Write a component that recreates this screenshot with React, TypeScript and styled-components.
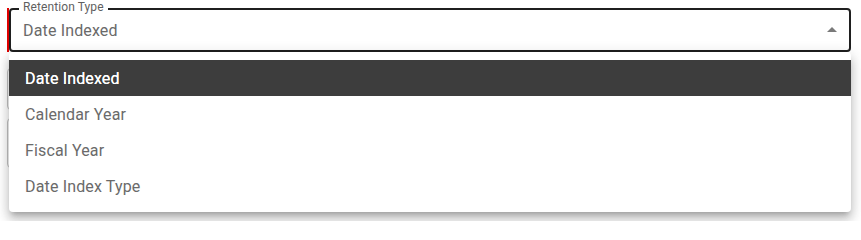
import React from 'react'
import styled, { createGlobalStyle } from 'styled-components'

const GlobalStyle = createGlobalStyle`
  html, body {
    margin: 0;
    padding: 0;
    background: #fff;
    font-family: Roboto, "Liberation Sans", sans-serif;
  }
`

const Page = styled.div`
  position: relative;
  width: 861px;
  height: 221px;
  box-sizing: border-box;
  padding: 8px 10px 0 7px;
  overflow: hidden;
`

const FieldRow = styled.div<{ $error?: boolean; $gap?: number }>`
  display: flex;
  border-left: 2px solid ${p => (p.$error ? '#e00000' : 'transparent')};
  margin-top: ${p => p.$gap ?? 0}px;
`

const Outlined = styled.div<{ $focused?: boolean; $height?: number }>`
  position: relative;
  flex: 1;
  display: flex;
  align-items: center;
  box-sizing: border-box;
  height: ${p => p.$height ?? 44}px;
  margin-left: ${p => (p.$focused ? '0' : '-2px')};
  padding: 0 5px 0 12px;
  border: ${p => (p.$focused ? '2px solid #1f1f1f' : '1px solid #c4c4c4')};
  border-radius: 4px;
`

const Label = styled.span`
  position: absolute;
  top: -10px;
  left: 8px;
  padding: 0 4px;
  background: #fff;
  font-size: 12px;
  line-height: 14px;
  letter-spacing: 0.1px;
  color: #5f5f5f;
`

const Value = styled.span`
  flex: 1;
  font-size: 16px;
  line-height: 19px;
  letter-spacing: 0.15px;
  color: #6a6a6a;
`

const Arrow = styled.svg`
  width: 24px;
  height: 24px;
  fill: #7a7a7a;
`

const Menu = styled.ul`
  position: absolute;
  top: 52px;
  left: 9px;
  width: 842px;
  margin: 0;
  padding: 8px 0;
  list-style: none;
  background: #fff;
  border-radius: 4px;
  box-shadow: 0px 5px 5px -3px rgba(0, 0, 0, 0.2), 0px 8px 10px 1px rgba(0, 0, 0, 0.14),
    0px 3px 14px 2px rgba(0, 0, 0, 0.12);
`

const Item = styled.li<{ $selected?: boolean }>`
  display: flex;
  align-items: center;
  height: 36px;
  padding: 0 16px;
  font-size: 16px;
  letter-spacing: 0.15px;
  font-weight: 400;
  color: ${p => (p.$selected ? '#fff' : '#6a6a6a')};
  background: ${p => (p.$selected ? '#3d3d3d' : 'transparent')};
  text-shadow: ${p => (p.$selected ? '0 0 0.4px #fff' : 'none')};
`

const options = ['Date Indexed', 'Calendar Year', 'Fiscal Year', 'Date Index Type']

export default function App() {
  const selected = 'Date Indexed'
  return (
    <Page>
      <GlobalStyle />
      <FieldRow $error>
        <Outlined $focused>
          <Label>Retention Type</Label>
          <Value>{selected}</Value>
          <Arrow viewBox="0 0 24 24">
            <path d="M7 14l5-5 5 5z" />
          </Arrow>
        </Outlined>
      </FieldRow>
      <FieldRow $gap={16}>
        <Outlined $height={42} />
      </FieldRow>
      <FieldRow $gap={8}>
        <Outlined $height={50} />
      </FieldRow>
      <Menu>
        {options.map(o => (
          <Item key={o} $selected={o === selected}>
            {o}
          </Item>
        ))}
      </Menu>
    </Page>
  )
}
